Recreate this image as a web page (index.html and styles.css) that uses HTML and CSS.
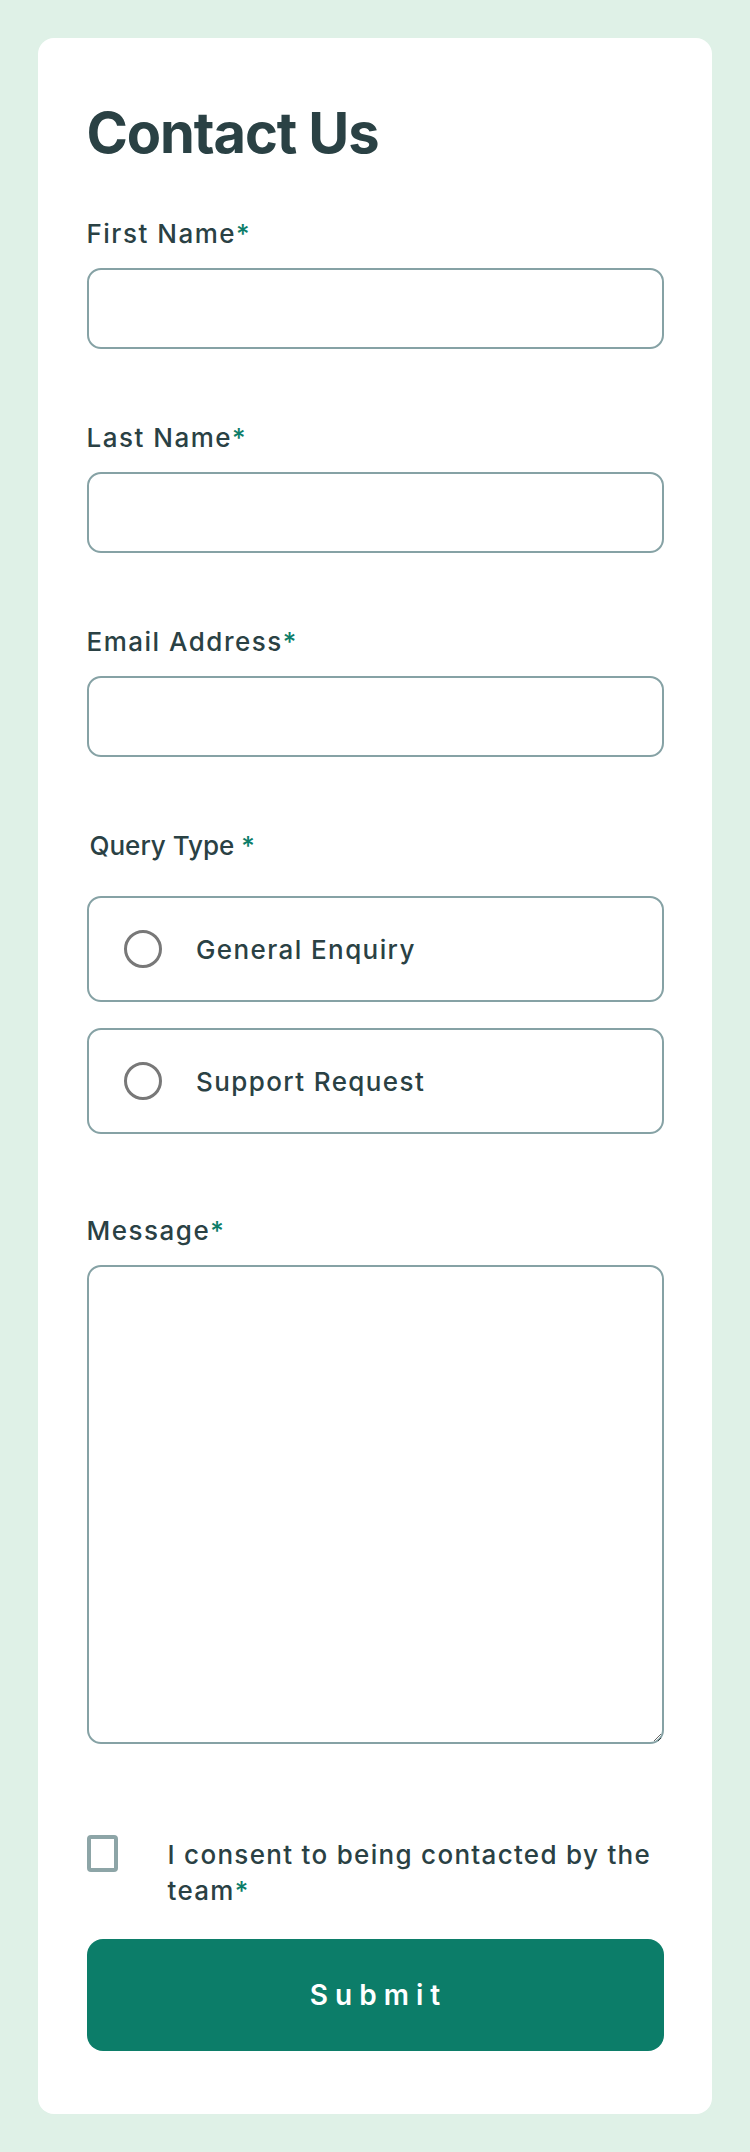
FILE: index.html
```html
<!DOCTYPE html>
<html lang="en">
<head>
<meta charset="utf-8">
<title>Contact Us</title>
<link rel="stylesheet" href="styles.css">
</head>
<body>
<main class="card">
  <h1 class="title">Contact Us</h1>
  <form class="form">
    <div class="field">
      <label class="label" for="fn">First Name<span class="req">*</span></label>
      <input id="fn" class="input" type="text">
    </div>
    <div class="field">
      <label class="label" for="ln">Last Name<span class="req">*</span></label>
      <input id="ln" class="input" type="text">
    </div>
    <div class="field">
      <label class="label" for="em">Email Address<span class="req">*</span></label>
      <input id="em" class="input" type="email">
    </div>
    <div class="field query" role="group">
      <span class="label legend">Query Type <span class="req">*</span></span>
      <div class="options">
        <label class="option"><input type="radio" name="q" class="radio"><span>General Enquiry</span></label>
        <label class="option"><input type="radio" name="q" class="radio"><span>Support Request</span></label>
      </div>
    </div>
    <div class="field message">
      <label class="label" for="msg">Message<span class="req">*</span></label>
      <textarea id="msg" class="textarea"></textarea>
    </div>
    <label class="consent"><input type="checkbox" class="check"><span class="consent-text">I consent to being contacted by the team<span class="req">*</span></span></label>
    <button type="button" class="submit">Submit</button>
  </form>
</main>
</body>
</html>
```
FILE: styles.css
```css
html, body {
  margin: 0;
}
body {
  padding: 38px;
  background: #dff1e7;
  font-family: Inter, "Noto Sans", sans-serif;
  color: #2a4144;
}
.card {
  background: #ffffff;
  border-radius: 16px;
  padding: 67px 48.5px 63px;
}
.title {
  margin: 0;
  font-size: 56px;
  line-height: 56px;
  font-weight: 700;
  letter-spacing: -1.1px;
}
.form {
  display: flex;
  flex-direction: column;
  margin-top: 58px;
}
.field {
  display: flex;
  flex-direction: column;
  gap: 19px;
  margin-bottom: 74px;
}
.label {
  font-size: 26px;
  font-weight: 500;
  line-height: 30px;
  letter-spacing: 1.5px;
}
.req {
  color: #0c7d69;
}
.input {
  box-sizing: border-box;
  height: 81px;
  margin: 0;
  border: 2px solid #86a2a5;
  border-radius: 14px;
  background: #fff;
  font: inherit;
}
.query {
  gap: 35px;
  margin-bottom: 82px;
}
.legend {
  padding-left: 3px;
  letter-spacing: 0;
}
.options {
  display: flex;
  flex-direction: column;
  gap: 26px;
}
.option {
  box-sizing: border-box;
  display: flex;
  align-items: center;
  gap: 34px;
  height: 106px;
  padding-left: 35.5px;
  border: 2px solid #86a2a5;
  border-radius: 14px;
  font-size: 26px;
  font-weight: 500;
  letter-spacing: 1.4px;
}
.radio {
  appearance: none;
  -webkit-appearance: none;
  box-sizing: border-box;
  flex-shrink: 0;
  width: 38px;
  height: 38px;
  margin: 0;
  border: 3px solid #787878;
  border-radius: 50%;
  background: #fff;
}
.message {
  margin-bottom: 91px;
}
.textarea {
  box-sizing: border-box;
  display: block;
  height: 479px;
  margin: 0;
  border: 2px solid #86a2a5;
  border-radius: 14px;
  font: inherit;
  resize: vertical;
}
.consent {
  display: flex;
  align-items: flex-start;
  gap: 50px;
  margin-bottom: 30px;
}
.check {
  appearance: none;
  -webkit-appearance: none;
  box-sizing: border-box;
  flex-shrink: 0;
  width: 31px;
  height: 37px;
  margin: 0;
  border: 4px solid #8da5a7;
  border-radius: 4px;
  background: #fff;
}
.consent-text {
  padding-top: 2px;
  font-size: 26px;
  font-weight: 500;
  line-height: 36px;
  letter-spacing: 1.3px;
}
.submit {
  height: 112px;
  border: 0;
  border-radius: 16px;
  background: #0c7d69;
  color: #ffffff;
  font-family: inherit;
  font-size: 28px;
  font-weight: 600;
  letter-spacing: 7px;
  padding: 0 0 0 7px;
}
```
